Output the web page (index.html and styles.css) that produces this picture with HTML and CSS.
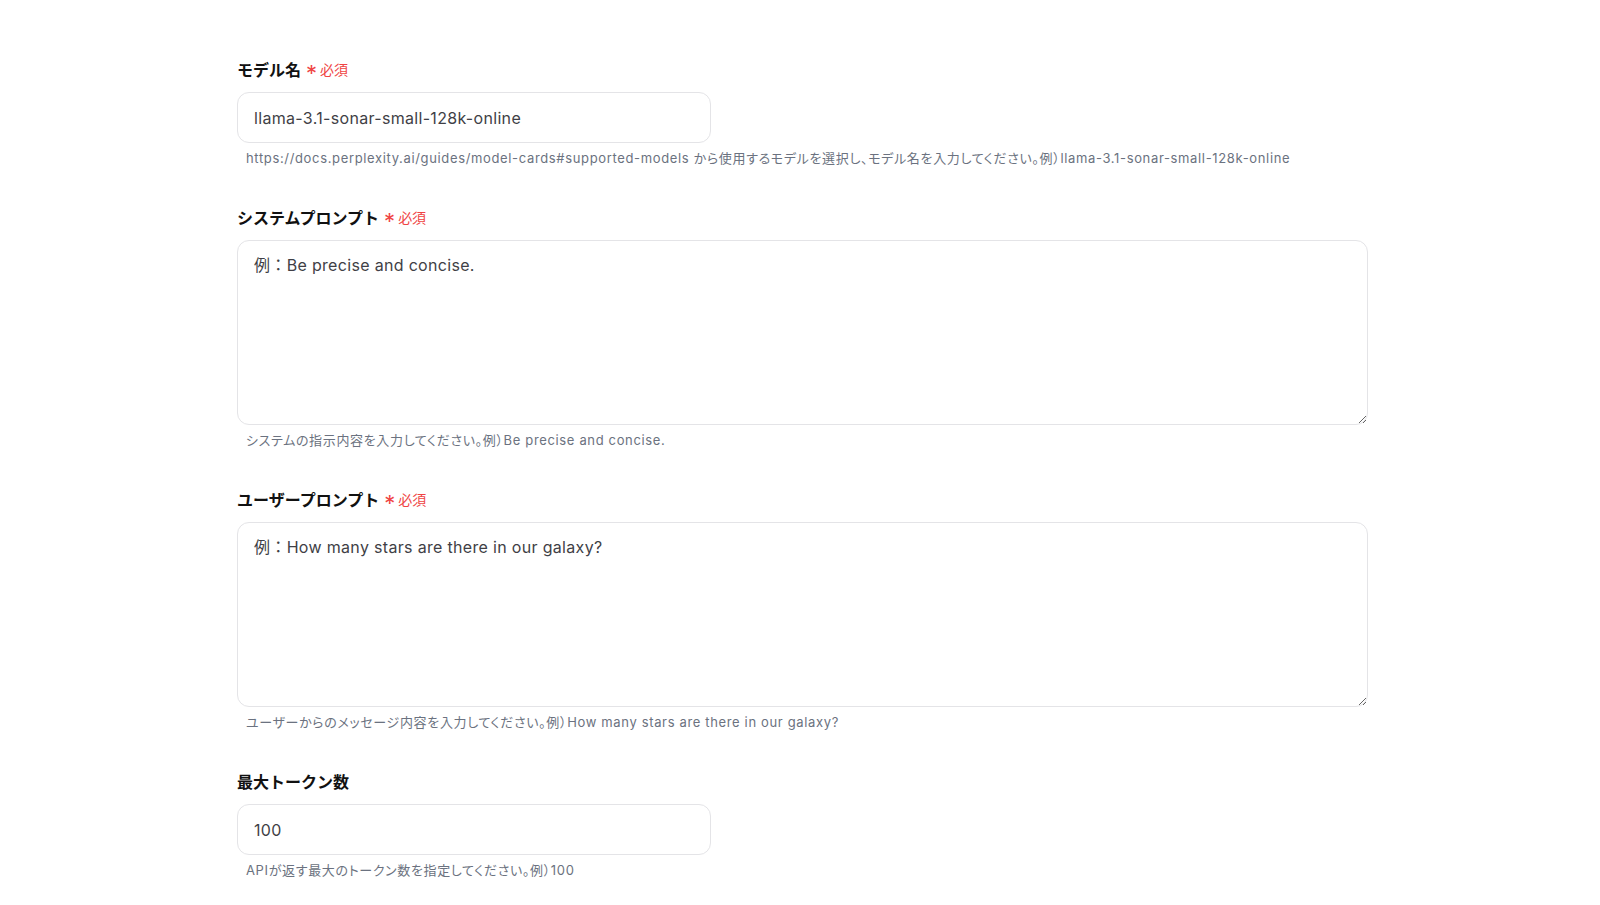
FILE: index.html
```html
<!DOCTYPE html>
<html lang="ja">
<head>
    <meta charset="UTF-8">
    <meta name="viewport" content="width=device-width, initial-scale=1.0">
    <title>Perplexity 設定</title>
    <link rel="stylesheet" href="styles.css">
</head>
<body>
    <form class="form">
        <div class="field">
            <label class="field-label" for="model">モデル名<span class="required"><span class="mark">*</span>必須</span></label>
            <input class="text-input" id="model" type="text" value="llama-3.1-sonar-small-128k-online">
            <p class="help">https://docs.perplexity.ai/guides/model-cards#supported-models から使用するモデルを選択し、モデル名を入力してください。例）llama-3.1-sonar-small-128k-online</p>
        </div>

        <div class="field">
            <label class="field-label" for="systemPrompt">システムプロンプト<span class="required"><span class="mark">*</span>必須</span></label>
            <textarea class="text-area" id="systemPrompt" placeholder="例：Be precise and concise."></textarea>
            <p class="help">システムの指示内容を入力してください。例）Be precise and concise.</p>
        </div>

        <div class="field">
            <label class="field-label" for="userPrompt">ユーザープロンプト<span class="required"><span class="mark">*</span>必須</span></label>
            <textarea class="text-area" id="userPrompt" placeholder="例：How many stars are there in our galaxy?"></textarea>
            <p class="help">ユーザーからのメッセージ内容を入力してください。例）How many stars are there in our galaxy?</p>
        </div>

        <div class="field">
            <label class="field-label" for="maxTokens">最大トークン数</label>
            <input class="text-input" id="maxTokens" type="text" value="100">
            <p class="help">APIが返す最大のトークン数を指定してください。例）100</p>
        </div>
    </form>
</body>
</html>
```

FILE: styles.css
```css
body {
    margin: 0;
    padding: 57px 0 0;
    background: #ffffff;
    font-family: Inter, "Noto Sans CJK JP", sans-serif;
    color: #111827;
}
.form {
    width: 1131px;
    margin-left: 237px;
}
.field {
    display: flex;
    flex-direction: column;
    align-items: flex-start;
    margin-bottom: 37px;
}
.field-label {
    display: flex;
    align-items: center;
    height: 24px;
    margin-bottom: 11px;
    font-size: 16px;
    font-weight: 700;
    color: #111111;
}
.required {
    display: inline-flex;
    align-items: center;
    margin-left: 5px;
    font-size: 14px;
    font-weight: 400;
    color: #ef4444;
}
.mark {
    font-size: 22px;
    line-height: 1;
    margin-right: 3px;
    position: relative;
    top: 4px;
}
.text-input,
.text-area {
    box-sizing: border-box;
    border: 1px solid #e4e4e7;
    border-radius: 12px;
    background: #ffffff;
    padding: 0 16px;
    font-family: Inter, "Noto Sans CJK JP", sans-serif;
    font-size: 16px;
    letter-spacing: 0.02em;
    color: #3f3f46;
    outline: none;
}
.text-input {
    width: 474px;
    height: 51px;
}
.text-area {
    width: 1131px;
    height: 185px;
    padding-top: 12px;
    line-height: 24px;
}
.text-area::placeholder {
    color: #3f3f46;
}
.help {
    margin: 5px 0 0;
    padding-left: 9px;
    font-size: 13px;
    line-height: 20px;
    letter-spacing: 0.05em;
    font-feature-settings: "palt";
    color: #6b7280;
}
```
